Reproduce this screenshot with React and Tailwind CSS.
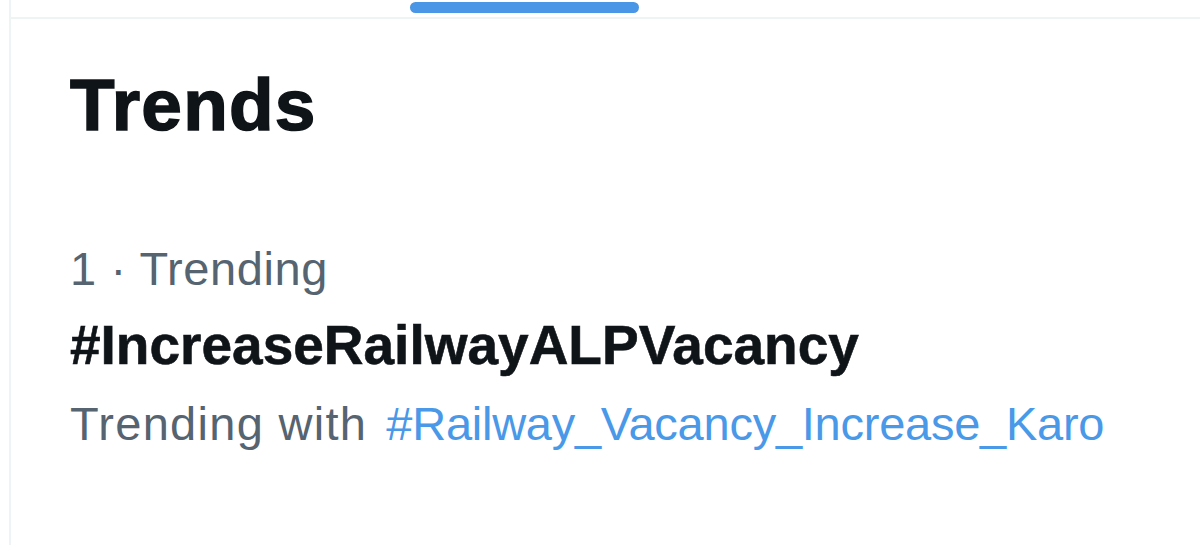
import React from 'react';

const trend = {
  rank: 1,
  context: 'Trending',
  tag: '#IncreaseRailwayALPVacancy',
  related: '#Railway_Vacancy_Increase_Karo',
};

function TabStrip() {
  return (
    <div className="relative h-[19px] border-b-2 border-[#eef3f4]">
      {/* active tab indicator */}
      <div className="absolute left-[399px] top-[2px] h-[11px] w-[229px] rounded-full bg-[#4a96e6]" />
    </div>
  );
}

export default function App() {
  return (
    <div
      className="h-[545px] w-[1200px] overflow-hidden bg-white"
      style={{ fontFamily: '"Liberation Sans", Arial, sans-serif' }}
    >
      <div className="ml-[9px] h-full border-l-2 border-[#eef3f4]">
        <TabStrip />
        <div className="pl-[59px] pt-[49px]">
          <h2 className="text-[73px] font-bold leading-none tracking-[1.2px] text-[#0f1419] [-webkit-text-stroke:1.5px_#0f1419]">
            Trends
          </h2>

          <div className="mt-[104px] text-[47px] leading-none tracking-[0.6px] text-[#566370]">
            {trend.rank} · {trend.context}
          </div>
          <div className="mt-[26px] text-[55px] font-bold leading-none text-[#0f1419] [-webkit-text-stroke:0.6px_#0f1419]">
            {trend.tag}
          </div>
          <div className="mt-[27px] flex text-[47px] leading-none text-[#566370]">
            <span className="tracking-[1.3px]">Trending with</span>
            <span className="ml-[19px] tracking-[-0.25px] text-[#4a98e8]">{trend.related}</span>
          </div>
        </div>
      </div>
    </div>
  );
}
